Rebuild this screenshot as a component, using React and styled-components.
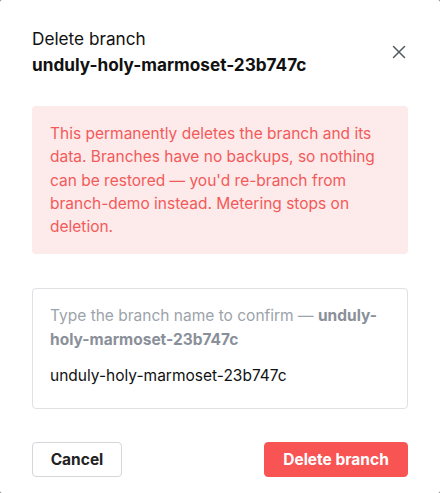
import React from 'react'
import styled, { createGlobalStyle } from 'styled-components'

const GlobalStyle = createGlobalStyle`
  html, body {
    margin: 0;
    padding: 0;
    background: #6b6b6b;
  }
  body {
    font-family: Inter, "Noto Sans", "Liberation Sans", sans-serif;
    -webkit-font-smoothing: antialiased;
  }
  * { box-sizing: border-box; }
`

const branchName = 'unduly-holy-marmoset-23b747c'

const DeleteBranchModal = () => {
  return (
    <Dialog>
      <Header>
        <div>
          <Title>Delete branch</Title>
          <BranchName>{branchName}</BranchName>
        </div>
        <CloseButton aria-label="Close">
          <svg width="14" height="14" viewBox="0 0 14 14" fill="none">
            <path d="M1.5 1.5l11 11M12.5 1.5l-11 11" stroke="#555a60" strokeWidth="1.5" strokeLinecap="round" />
          </svg>
        </CloseButton>
      </Header>

      <Alert>
        This permanently deletes the branch and its data. Branches have no backups, so nothing
        can be restored — you'd re-branch from branch-demo instead. Metering stops on deletion.
      </Alert>

      <ConfirmField>
        <Label>
          Type the branch name to confirm — <strong>{branchName}</strong>
        </Label>
        <Input defaultValue={branchName} />
      </ConfirmField>

      <Footer>
        <Button>Cancel</Button>
        <Button $danger>Delete branch</Button>
      </Footer>
    </Dialog>
  )
}

export default function App() {
  return (
    <>
      <GlobalStyle />
      <DeleteBranchModal />
    </>
  )
}

const Dialog = styled.div`
  width: 440px;
  height: 493px;
  background: #fff;
  border-radius: 2px;
  padding: 26px 32px 0;
  display: flex;
  flex-direction: column;
`

const Header = styled.div`
  display: flex;
  align-items: center;
  justify-content: space-between;
`

const Title = styled.div`
  font-size: 17.2px;
  line-height: 26px;
  color: #111;
`

const BranchName = styled.div`
  font-size: 17.2px;
  line-height: 26px;
  font-weight: 700;
  color: #111;
`

const CloseButton = styled.button`
  border: 0;
  background: none;
  padding: 0;
  margin-right: 2px;
  display: flex;
  cursor: pointer;
`

const Alert = styled.div`
  margin-top: 28px;
  background: #fdeaea;
  border-radius: 4px;
  padding: 16px 18px;
  font-size: 15.5px;
  line-height: 1.5;
  color: #f25a5a;
`

const ConfirmField = styled.div`
  margin-top: 34px;
  border: 1px solid #dfe1e5;
  border-radius: 4px;
  padding: 15px 17px 20px;
`

const Label = styled.div`
  font-size: 15.5px;
  line-height: 1.55;
  color: #9ca3ab;
  strong {
    font-weight: 700;
    color: #8a9099;
  }
`

const Input = styled.input`
  display: block;
  width: 100%;
  margin-top: 12px;
  border: 0;
  outline: none;
  padding: 0;
  font: inherit;
  font-size: 15.5px;
  line-height: 24px;
  height: 24px;
  color: #111;
  background: transparent;
`

const Footer = styled.div`
  margin-top: 33px;
  display: flex;
  justify-content: space-between;
`

const Button = styled.button`
  height: 35px;
  padding: 0;
  width: ${p => (p.$danger ? '144px' : '90px')};
  border-radius: 4px;
  font-family: inherit;
  font-size: 15.5px;
  font-weight: 700;
  cursor: pointer;
  border: 1px solid ${p => (p.$danger ? '#f85454' : '#d4d6da')};
  background: ${p => (p.$danger ? '#f85454' : '#fff')};
  color: ${p => (p.$danger ? '#fff' : '#222')};
`
